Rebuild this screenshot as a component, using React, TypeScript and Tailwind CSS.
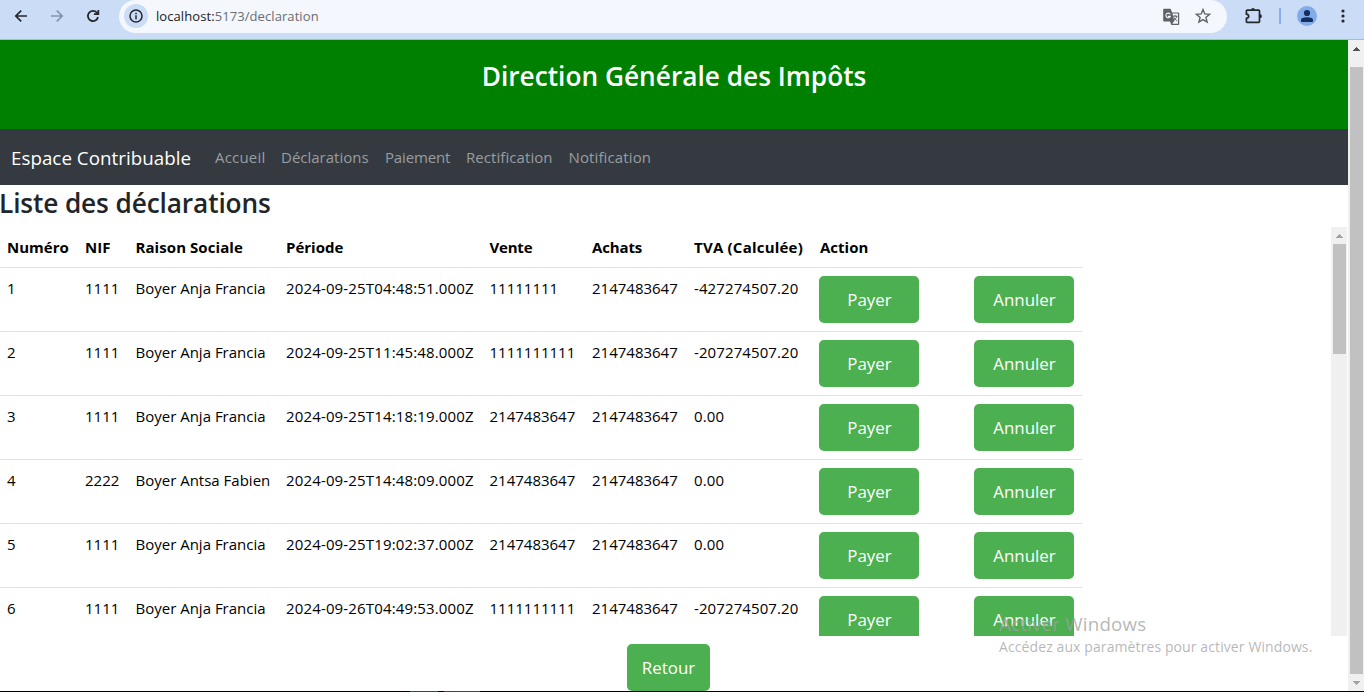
import React from "react";

type Row = {
  id: number;
  nif: string;
  name: string;
  period: string;
  sales: string;
  purchases: string;
  vat: string;
};

const rows: Row[] = [
  { id: 1, nif: "1111", name: "Boyer Anja Francia", period: "2024-09-25T04:48:51.000Z", sales: "11111111", purchases: "2147483647", vat: "-427274507.20" },
  { id: 2, nif: "1111", name: "Boyer Anja Francia", period: "2024-09-25T11:45:48.000Z", sales: "1111111111", purchases: "2147483647", vat: "-207274507.20" },
  { id: 3, nif: "1111", name: "Boyer Anja Francia", period: "2024-09-25T14:18:19.000Z", sales: "2147483647", purchases: "2147483647", vat: "0.00" },
  { id: 4, nif: "2222", name: "Boyer Antsa Fabien", period: "2024-09-25T14:48:09.000Z", sales: "2147483647", purchases: "2147483647", vat: "0.00" },
  { id: 5, nif: "1111", name: "Boyer Anja Francia", period: "2024-09-25T19:02:37.000Z", sales: "2147483647", purchases: "2147483647", vat: "0.00" },
  { id: 6, nif: "1111", name: "Boyer Anja Francia", period: "2024-09-26T04:49:53.000Z", sales: "1111111111", purchases: "2147483647", vat: "-207274507.20" },
];

const columns = [
  { label: "Numéro", width: "w-[77px] pl-[7px]" },
  { label: "NIF", width: "w-[51px] pl-2" },
  { label: "Raison Sociale", width: "w-[150px] pl-[7.5px] tracking-[0.07px]" },
  { label: "Période", width: "w-[204px] pl-2" },
  { label: "Vente", width: "w-[102px] pl-[7.5px] tracking-[-0.2px]" },
  { label: "Achats", width: "w-[102px] pl-2 tracking-[-0.15px]" },
  { label: "TVA (Calculée)", width: "w-[125px] pl-2 tracking-[0.22px]" },
  { label: "Action", width: "w-[155px] pl-[9px]" },
  { label: "", width: "w-[116px]" },
];

const links = [
  { label: "Accueil", width: "w-[66px] tracking-[0.2px]" },
  { label: "Déclarations", width: "w-[104px]" },
  { label: "Paiement", width: "w-[81px] tracking-[-0.15px]" },
  { label: "Rectification", width: "w-[102.5px] tracking-[0.07px]" },
  { label: "Notification", width: "w-[100px] tracking-[0.12px]" },
];

function BrowserBar() {
  return (
    <div className="flex h-10 shrink-0 border-b border-[#a9bad8] bg-[#cbdcf6]">
      <div className="flex h-8 w-[119px] shrink-0 items-center gap-3 pl-[9px]">
        <svg className="size-6 p-0.5" viewBox="0 0 20 20" fill="none" stroke="#24272c" strokeWidth="1.7">
          <path d="M16 10H4.8M10.2 4.6 4.8 10l5.4 5.4" />
        </svg>
        <svg className="size-6 p-0.5" viewBox="0 0 20 20" fill="none" stroke="#8494ab" strokeWidth="1.7">
          <path d="M4 10h11.2M9.8 4.6l5.4 5.4-5.4 5.4" />
        </svg>
        <svg className="size-6 p-0.5" viewBox="0 0 20 20" fill="none" stroke="#24272c" strokeWidth="1.8">
          <path d="M15 11a5.1 5.1 0 1 1-1.2-4.4L15.3 8" />
          <path d="M15.3 4v4.2h-4.4" />
        </svg>
      </div>
      <div className="flex h-[33px] w-[1108px] shrink-0 items-center rounded-[17px] bg-[#f4f7fd] pr-[15px] pl-[5px]">
        <span className="-mt-px flex size-6 items-center justify-center rounded-full bg-[#cbdcf6]">
          <svg className="size-4" viewBox="0 0 16 16" fill="none" stroke="#24272c" strokeWidth="1.5">
            <circle cx="8" cy="8" r="6" />
            <path d="M8 7.3v3.9M8 4.7v1.5" />
          </svg>
        </span>
        <span className="-mt-px ml-2 grow text-[13px] leading-5 tracking-[0.08px] text-[#6a6d72]">
          <span className="text-[#202124]">localhost:</span>5173/declaration
        </span>
        <svg className="mr-3.5 size-[18px]" viewBox="0 0 18 18">
          <path d="M2 .8h6.6l1.5 3.7h6.3q.8 0 .8.8v11q0 .8-.8.8H9.3L8 13.6H2q-.8 0-.8-.8V1.6Q1.2.8 2 .8Z" fill="#5f6368" />
          <path d="M10.5 5.6h5.5v10.2h-5.6l1.3-2.2h.7z" fill="#f4f7fd" />
          <path d="M8.2 6.2a2.3 2.3 0 1 0 .1 2.2H6" fill="none" stroke="#f4f7fd" strokeWidth="1.1" />
          <path d="M11 8.2h4.6M13.2 7v1.2M14.9 8.2q-.7 2.6-3 4.2M11.7 9.4q1 2 3.5 3.5" fill="none" stroke="#5f6368" strokeWidth="1" />
        </svg>
        <svg className="-mt-px size-[18px]" viewBox="0 0 18 18" fill="none" stroke="#5f6368" strokeWidth="1.4">
          <path d="m9 2.5 1.8 4.4 4.8.4-3.7 3.1 1.2 4.7L9 12.6l-4.1 2.5L6.1 10.4 2.4 7.3l4.8-.4z" />
        </svg>
      </div>
      <div className="flex h-8 grow items-center">
        <svg className="ml-[17px] size-5" viewBox="0 0 20 20" fill="none" stroke="#24272c" strokeWidth="1.7">
          <path d="M3.300 4.200h11.300q.9 0 .9.9v10.300q0 .9-.9.9H3.300q-.9 0-.9-.9v-3q2.300-.3 2.300-2.100T2.400 8.200V5.100q0-.9.9-.9z" />
          <path d="M7.100 3.800a1.900 1.900 0 0 1 3.800 0zM16 8.300a1.900 1.900 0 0 1 0 3.800z" fill="#24272c" stroke="none" />
        </svg>
        <span className="ml-[15px] h-4 w-0.5 bg-[#86afec]" />
        <span className="ml-4 flex size-5 items-center justify-center rounded-full bg-[#83abea]">
          <svg className="size-5" viewBox="0 0 20 20" fill="#132f60">
            <circle cx="10" cy="7" r="3.1" />
            <path d="M4 15.300v-1.500q0-2.500 6-2.500t6 2.500v1.500q0 .7-.7.7H4.700q-.7 0-.7-.7z" />
          </svg>
        </span>
        <svg className="ml-4 size-5" viewBox="0 0 20 20" fill="#24272c">
          <circle cx="10" cy="5" r="1.6" />
          <circle cx="10" cy="10" r="1.6" />
          <circle cx="10" cy="15" r="1.6" />
        </svg>
      </div>
    </div>
  );
}

function Arrow({ down = false, color }: { down?: boolean; color: string }) {
  return (
    <svg className="h-[17px] w-4 shrink-0" viewBox="0 0 16 17" fill={color} shapeRendering="crispEdges">
      {down ? <path d="M5 7h7v1h-1v1h-1v1H9v1H8v-1H7V9H6V8H5z" /> : <path d="M8 7h1v1h1v1h1v1h1v1H5v-1h1V9h1V8h1z" />}
    </svg>
  );
}

function ActionButton({ label }: { label: string }) {
  return (
    <button className="block h-[47px] w-[100px] rounded-[5px] bg-[#4caf50] pl-px text-[16.9px] leading-6 text-white">
      {label}
    </button>
  );
}

export default function App() {
  return (
    <div className="flex h-[692px] w-[1364px] flex-col overflow-hidden bg-white font-['Open_Sans',sans-serif]">
      <BrowserBar />
      <div className="flex min-h-0 grow">
        <main className="relative flex w-[1348px] flex-col">
          <header className="h-[89px] shrink-0 bg-[#008000] pt-[19px] text-center">
            <h1 className="text-[26.25px] leading-[34px] font-semibold text-white">Direction Générale des Impôts</h1>
          </header>
          <nav className="flex h-14 shrink-0 items-center bg-[#343a40] pl-[11px]">
            <span className="w-[204px] pt-0.5 text-[18.75px] tracking-[0.03px] text-white">Espace Contribuable</span>
            {links.map((link) => (
              <a key={link.label} className={`${link.width} shrink-0 text-[15px] whitespace-nowrap text-[#9a9da0]`}>
                {link.label}
              </a>
            ))}
          </nav>
          <h2 className="-ml-px h-[42px] shrink-0 text-[26.25px] leading-[36px] font-semibold tracking-[-0.13px] text-[#212529]">Liste des déclarations</h2>
          <div className="flex h-[409px] shrink-0 justify-between overflow-hidden">
            <table className="h-fit w-[1082px] table-fixed border-separate border-spacing-0 text-[15px] leading-6 text-black">
              <thead>
                <tr className="h-[41px]">
                  {columns.map((column, i) => (
                    <th key={i} className={`${column.width} border-b border-[#dee2e6] py-0 pr-0 text-left font-bold whitespace-nowrap`}>
                      {column.label}
                    </th>
                  ))}
                </tr>
              </thead>
              <tbody className="[&_td]:border-b [&_td]:border-[#dee2e6] [&_td]:pt-2">
                {rows.map((row) => (
                  <tr key={row.id} className="h-16 align-top whitespace-nowrap">
                    <td className="pl-[7px]">{row.id}</td>
                    <td className="pl-2">{row.nif}</td>
                    <td className="pl-[7.5px]">{row.name}</td>
                    <td className="pl-2 tracking-[0.15px]">{row.period}</td>
                    <td className="pl-[7.5px]">{row.sales}</td>
                    <td className="pl-2">{row.purchases}</td>
                    <td className="pl-2 tracking-[0.1px]">{row.vat}</td>
                    <td className="pl-2"><ActionButton label="Payer" /></td>
                    <td className="pl-2"><ActionButton label="Annuler" /></td>
                  </tr>
                ))}
              </tbody>
            </table>
            <div className="mr-px flex w-4 shrink-0 flex-col bg-[#f0f0f0]">
              <Arrow color="#a3a3a3" />
              <div className="ml-0.5 h-[110px] w-[13px] bg-[#c1c1c1]" />
            </div>
          </div>
          <div className="flex shrink-0 pt-2 pl-[627px]">
            <button className="h-[47px] w-[83px] rounded-[5px] bg-[#4caf50] text-[16.9px] leading-6 text-white">Retour</button>
          </div>
          <div className="pointer-events-none absolute top-[572px] left-[999px] whitespace-nowrap text-[#a0a0a0]/75">
            <p className="text-[18.75px] leading-6 tracking-[0.2px]">Activer Windows</p>
            <p className="text-[14px] leading-[22px] tracking-[0.1px]">Accédez aux paramètres pour activer Windows.</p>
          </div>
        </main>
        <div className="flex w-4 flex-col bg-[#f0f0f0]">
          <Arrow color="#505050" />
          <div className="mt-2.5 ml-0.5 h-[607px] w-[13px] shrink-0 bg-[#c1c1c1]" />
          <Arrow down color="#a3a3a3" />
        </div>
      </div>
      <div className="flex h-px shrink-0 bg-black pl-[410px]">
        <span className="w-7 bg-[#2d5030]" />
        <span className="ml-1.5 w-9 bg-[#444444]" />
      </div>
    </div>
  );
}
